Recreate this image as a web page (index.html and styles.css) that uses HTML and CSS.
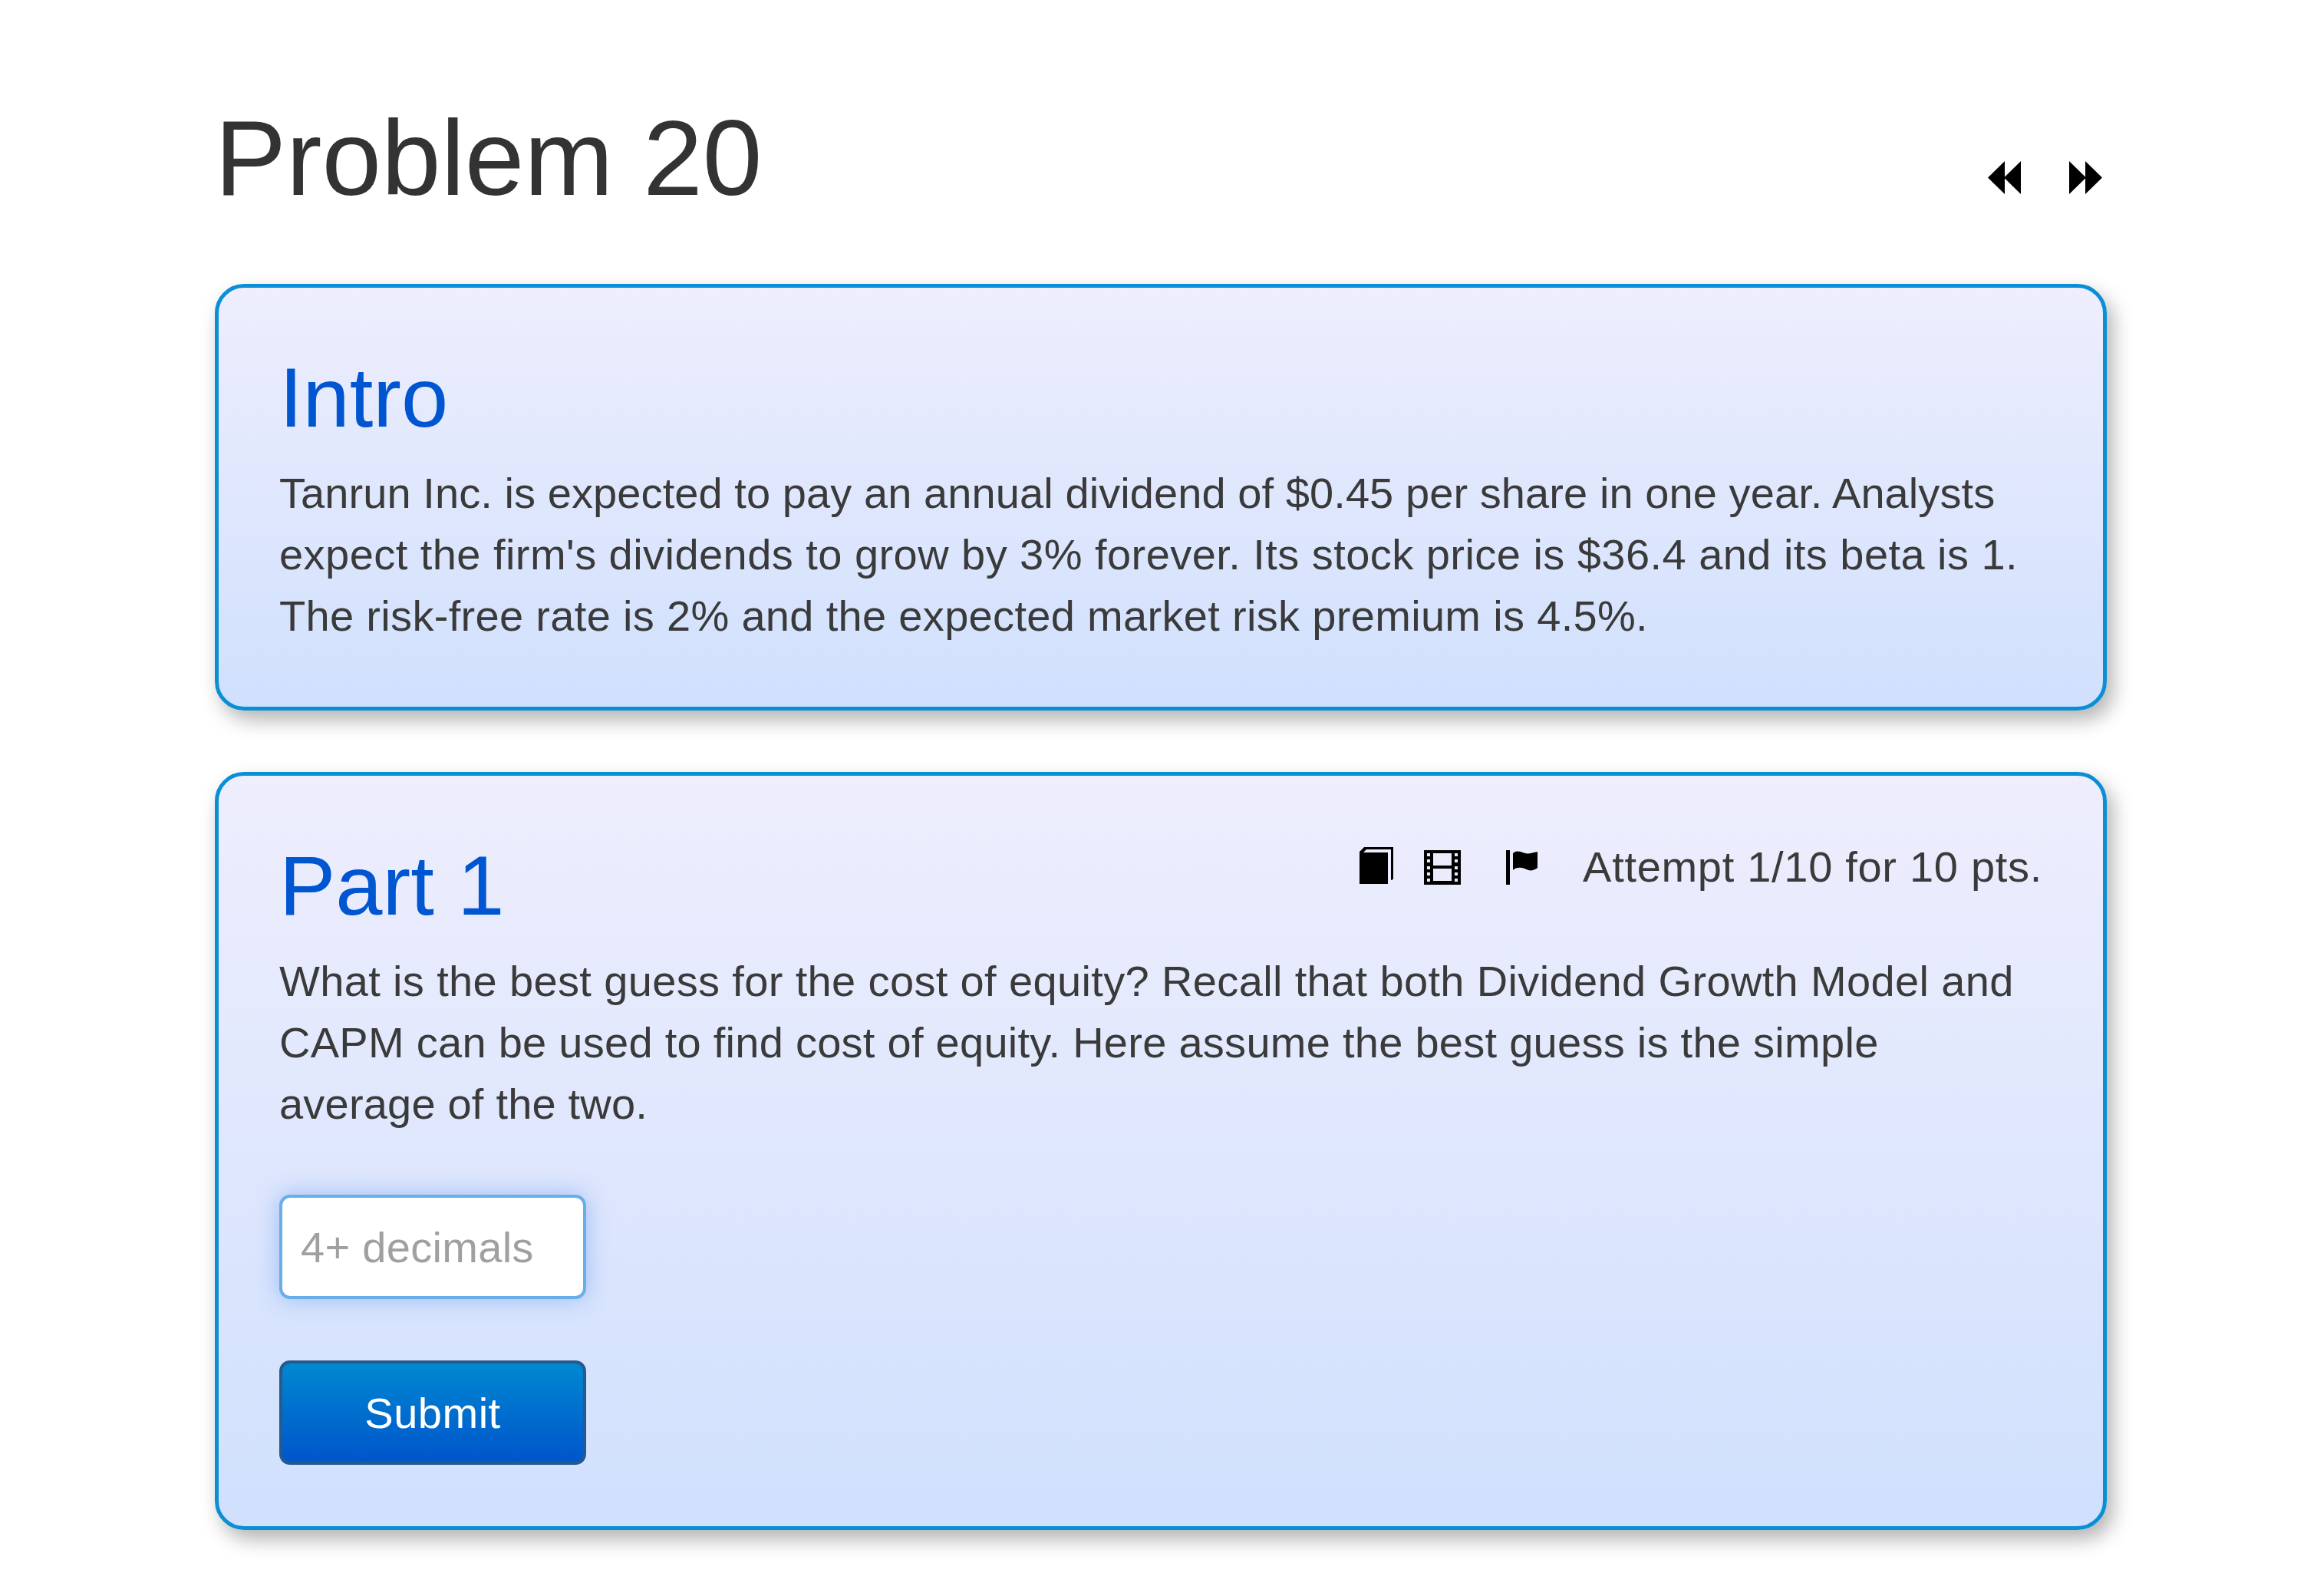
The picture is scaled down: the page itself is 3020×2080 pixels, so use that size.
FILE: index.html
```html
<!DOCTYPE html>
<html lang="en">
<head>
<meta charset="utf-8">
<title>Problem 20</title>
<link rel="stylesheet" href="styles.css">
</head>
<body>
<main class="page">
  <header class="page-head">
    <h1 class="page-title">Problem 20</h1>
    <nav class="pager">
      <svg class="pager-icon" viewBox="0 0 43 43"><path d="M22 0v43L0 21.5zM43 0v43L21 21.5z"/></svg>
      <svg class="pager-icon" viewBox="0 0 43 43"><path d="M0 0v43l22-21.5zM21 0v43l22-21.5z"/></svg>
    </nav>
  </header>
  <section class="card">
    <h2 class="card-title">Intro</h2>
    <p class="card-text">
      <span class="line ls-a">Tanrun Inc. is expected to pay an annual dividend of $0.45 per share in one year. Analysts</span>
      <span class="line ls-d">expect the firm's dividends to grow by 3% forever. Its stock price is $36.4 and its beta is 1.</span>
      <span class="line ls-c">The risk-free rate is 2% and the expected market risk premium is 4.5%.</span>
    </p>
  </section>
  <section class="card card-part">
    <div class="part-head">
      <h2 class="card-title">Part 1</h2>
      <div class="part-meta">
        <svg class="tool-icon tool-book" viewBox="0 0 44 48"><path d="M0 6L6 0h38v42l-3 1V3H9L5 7h32v41H0z"/></svg>
        <svg class="tool-icon tool-film" viewBox="0 0 48 45" fill-rule="evenodd"><path d="M0 0h48v45H0zM12 4v16h24V4zM12 24v16h24V24zM4 4v4h4V4zM40 4v4h4V4zM4 12v4h4v-4zM40 12v4h4v-4zM4 21v4h4v-4zM40 21v4h4v-4zM4 29v4h4v-4zM40 29v4h4v-4zM4 37v4h4v-4zM40 37v4h4v-4z"/></svg>
        <svg class="tool-icon tool-flag" viewBox="0 0 42 45"><path d="M0 0h5v45H0zM9 4c3-3 6-3 10-2 5 2 9 3 13 2l9-2v21c-4 3-8 4-12 3-5-2-9-4-13-3-3 0-5 1-7 3z"/></svg>
        <span class="attempt">Attempt 1/10 for 10 pts.</span>
      </div>
    </div>
    <p class="card-text">
      <span class="line ls-e">What is the best guess for the cost of equity? Recall that both Dividend Growth Model and</span>
      <span class="line ls-f">CAPM can be used to find cost of equity. Here assume the best guess is the simple</span>
      <span class="line ls-b">average of the two.</span>
    </p>
    <input class="answer" type="text" placeholder="4+ decimals">
    <button class="submit" type="button">Submit</button>
  </section>
</main>
</body>
</html>
```

FILE: styles.css
```css
* { box-sizing: border-box; }
html, body { margin: 0; background: #fff; }
body {
  font-family: "Liberation Sans", Arial, sans-serif;
  color: #333;
}
.page {
  width: 2466px;
  margin-left: 280px;
  padding-top: 124px;
}
.page-head {
  display: flex;
  justify-content: space-between;
  align-items: flex-start;
  height: 246px;
}
.page-title {
  margin: 0;
  font-size: 139.5px;
  font-weight: 400;
  line-height: 164px;
}
.pager {
  display: flex;
  gap: 63px;
  margin: 86px 6px 0 0;
}
.pager-icon { display: block; width: 43px; height: 43px; fill: #000; }
.card {
  margin-bottom: 80px;
  padding: 79px 79px 78px;
  border: 5px solid #0a8fd6;
  border-radius: 38px;
  background: linear-gradient(#eeeefd, #d0e0fd);
  box-shadow: 8px 12px 26px rgba(0,0,0,.3);
}
.card-part { padding-bottom: 80px; }
.card-title {
  margin: -2px 0 19px;
  font-size: 110px;
  font-weight: 400;
  line-height: 132px;
  color: #0055d0;
}
.card-text {
  margin: 0;
  font-size: 56px;
  line-height: 80px;
  color: #3a3a3a;
}
.line { display: block; white-space: nowrap; }
.ls-a { letter-spacing: .08px; }
.ls-b { letter-spacing: .2px; }
.ls-c { letter-spacing: .32px; }
.ls-d { letter-spacing: .45px; }
.ls-e { letter-spacing: .36px; }
.ls-f { letter-spacing: .27px; }
.part-head {
  display: flex;
  justify-content: space-between;
  align-items: flex-start;
}
.part-meta {
  display: flex;
  align-items: center;
  height: 80px;
  margin-top: 0;
}
.tool-icon { display: block; fill: #000; }
.tool-book { width: 44px; height: 48px; margin: -4px 40px 0 0; }
.tool-film { width: 48px; height: 45px; margin: 0 59px 0 0; }
.tool-flag { width: 42px; height: 45px; margin: 0 58px 0 0; }
.attempt { font-size: 56px; line-height: 80px; letter-spacing: .7px; color: #3a3a3a; }
.answer {
  display: block;
  width: 400px;
  height: 136px;
  margin-top: 78px;
  padding: 0 24px;
  border: 4px solid #68aee8;
  border-radius: 14px;
  background: #fff;
  font-family: "Liberation Sans", Arial, sans-serif;
  font-size: 56px;
  letter-spacing: .3px;
  box-shadow: 0 0 30px rgba(82,140,235,.45);
}
.answer::placeholder { color: #a0a0a0; opacity: 1; }
.submit {
  display: block;
  width: 400px;
  height: 136px;
  margin-top: 80px;
  border: 4px solid #245a8e;
  border-radius: 14px;
  background: linear-gradient(#0088d0, #0055cc);
  color: #fff;
  font-family: "Liberation Sans", Arial, sans-serif;
  font-size: 56px;
  letter-spacing: .5px;
}
```
